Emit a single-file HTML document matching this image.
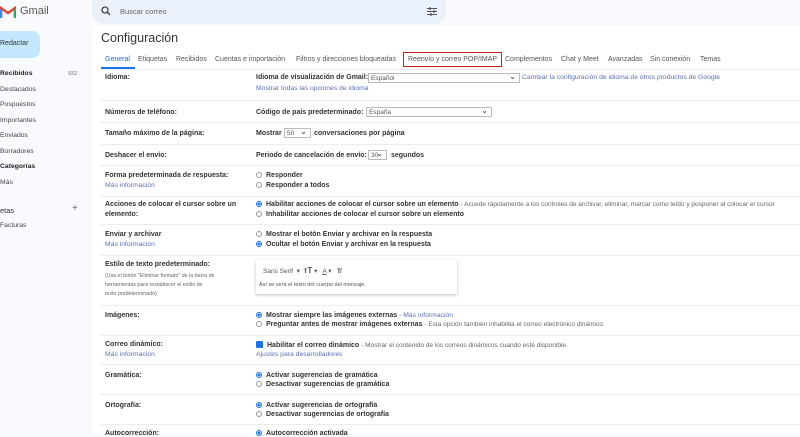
<!DOCTYPE html>
<html><head><meta charset="utf-8"><style>
*{margin:0;padding:0;box-sizing:border-box}
body{width:800px;height:434px;overflow:hidden;background:#f8fafd;font-family:"Liberation Sans",sans-serif;color:#202124;position:relative}
.a{position:absolute;white-space:nowrap}
.main{position:absolute;left:92px;top:26px;width:708px;height:408px;background:#fff}
.s{font-size:6.5px;color:#444}
.b{font-weight:bold;font-size:7px;color:#333}
.l{font-size:7px;color:#333;font-weight:bold}
.lk{color:#5a6fb8;font-size:6.8px}
.g{color:#666;font-size:6.5px}
.sep{position:absolute;left:101px;width:699px;height:1px;background:#ececec}
.tab{position:absolute;top:56px;font-size:7px;color:#555}
.r{display:inline-block;width:6px;height:6px;border:1px solid #999;border-radius:50%;vertical-align:-1px;margin-right:4px}
.r.on{border-color:#1a73e8;background:radial-gradient(#1a73e8 45%,#fff 55%)}
.sel{position:absolute;border:1px solid #bbb;height:10px;font-size:6.5px;color:#555;padding:1px 2px;background:#fff}
.sel:after{content:"⌄";position:absolute;right:3px;top:-2px;font-size:8px;color:#333}
.side{position:absolute;left:0;font-size:6.8px;color:#444}
</style></head><body>
<svg class="a" style="left:0;top:6px" width="16" height="12" viewBox="0 0 16 12"><path d="M1 12V2l7 5 7-5v10" fill="none" stroke="#ea4335" stroke-width="2.4"/><path d="M1 12V3" stroke="#4285f4" stroke-width="2.4"/><path d="M15 12V3" stroke="#34a853" stroke-width="2.4"/></svg>
<div class="a" style="left:20px;top:5px;font-size:11px;color:#555">Gmail</div>
<div class="a" style="left:92px;top:0;width:354px;height:24px;background:#eaf1fb;border-radius:0 0 12px 12px"></div>
<svg class="a" style="left:101px;top:6px" width="10" height="10" viewBox="0 0 10 10"><circle cx="4" cy="4" r="3" fill="none" stroke="#444" stroke-width="1.3"/><path d="M6.3 6.3L9 9" stroke="#444" stroke-width="1.4"/></svg>
<div class="a" style="left:120px;top:7px;font-size:7.5px;color:#666">Buscar correo</div>
<svg class="a" style="left:427px;top:7px" width="10" height="9" viewBox="0 0 10 9"><path d="M0 1.5h10M0 4.5h10M0 7.5h10" stroke="#555" stroke-width="1"/><path d="M3 0v3M7 3v3M4 6v3" stroke="#555" stroke-width="1.2"/></svg>
<div class="a" style="left:-10px;top:31px;width:50px;height:27px;background:#c2e7ff;border-radius:8px"></div>
<div class="a" style="left:0;top:40px;font-size:7px;color:#333">Redactar</div>
<div class="side" style="top:70px;font-weight:bold;color:#222">Recibidos</div><div class="a" style="left:68px;top:71px;font-size:5.5px;color:#777">932</div>
<div class="side" style="top:86px">Destacados</div>
<div class="side" style="top:101px">Pospuestos</div>
<div class="side" style="top:117px">Importantes</div>
<div class="side" style="top:132px">Enviados</div>
<div class="side" style="top:148px">Borradores</div>
<div class="side" style="top:163px;font-weight:bold;color:#222">Categorías</div>
<div class="side" style="top:179px">Más</div>
<div class="side" style="top:206px;font-size:7.5px;color:#333">etas</div><div class="a" style="left:72px;top:203px;font-size:10px;color:#666">+</div>
<div class="side" style="top:222px">Facturas</div>
<div class="main"></div>
<div class="a" style="left:101px;top:31px;font-size:12.5px;color:#333">Configuración</div>
<div class="tab" style="left:105px;color:#1a73e8">General</div>
<div class="a" style="left:101px;top:67px;width:34px;height:2px;background:#1a73e8"></div>
<div class="tab" style="left:138px">Etiquetas</div>
<div class="tab" style="left:176px">Recibidos</div>
<div class="tab" style="left:215px">Cuentas e importación</div>
<div class="tab" style="left:296px">Filtros y direcciones bloqueadas</div>
<div class="a" style="left:403px;top:52px;width:99px;height:15px;border:1.5px solid #c5221f"></div>
<div class="tab" style="left:408px">Reenvío y correo POP/IMAP</div>
<div class="tab" style="left:505px">Complementos</div>
<div class="tab" style="left:561px">Chat y Meet</div>
<div class="tab" style="left:608px">Avanzadas</div>
<div class="tab" style="left:650px">Sin conexión</div>
<div class="tab" style="left:700px">Temas</div>
<div class="sep" style="top:69px"></div>
<div class="a l" style="left:105px;top:74px">Idioma:</div>
<div class="a b" style="left:256px;top:74px">Idioma de visualización de Gmail:</div>
<div class="sel" style="left:368px;top:73px;width:152px">Español</div>
<div class="a lk" style="left:522px;top:74px">Cambiar la configuración de idioma de otros productos de Google</div>
<div class="a lk" style="left:256px;top:85px">Mostrar todas las opciones de idioma</div>
<div class="sep" style="top:100px"></div>
<div class="a l" style="left:105px;top:109px">Números de teléfono:</div>
<div class="a b" style="left:256px;top:109px">Código de país predeterminado:</div>
<div class="sel" style="left:366px;top:107px;width:126px">España</div>
<div class="sep" style="top:122px"></div>
<div class="a l" style="left:105px;top:130px">Tamaño máximo de la página:</div>
<div class="a b" style="left:256px;top:130px">Mostrar</div><div class="sel" style="left:284px;top:128px;width:27px">50</div><div class="a b" style="left:314px;top:130px">conversaciones por página</div>
<div class="sep" style="top:144px"></div>
<div class="a l" style="left:105px;top:152px">Deshacer el envío:</div>
<div class="a b" style="left:256px;top:152px">Periodo de cancelación de envío:</div><div class="sel" style="left:368px;top:150px;width:19px">30</div><div class="a b" style="left:391px;top:152px">segundos</div>
<div class="sep" style="top:165px"></div>
<div class="a l" style="left:105px;top:172px">Forma predeterminada de respuesta:</div>
<div class="a lk" style="left:105px;top:182px">Más información</div>
<div class="a b" style="left:256px;top:172px"><span class="r"></span>Responder</div>
<div class="a b" style="left:256px;top:182px"><span class="r"></span>Responder a todos</div>
<div class="sep" style="top:196px"></div>
<div class="a l" style="left:105px;top:201px">Acciones de colocar el cursor sobre un</div>
<div class="a l" style="left:105px;top:211px">elemento:</div>
<div class="a b" style="left:256px;top:201px"><span class="r on"></span>Habilitar acciones de colocar el cursor sobre un elemento <span class="g" style="font-weight:normal">- Accede rápidamente a los controles de archivar, eliminar, marcar como leído y posponer al colocar el cursor</span></div>
<div class="a b" style="left:256px;top:211px"><span class="r"></span>Inhabilitar acciones de colocar el cursor sobre un elemento</div>
<div class="sep" style="top:224px"></div>
<div class="a l" style="left:105px;top:231px">Enviar y archivar</div>
<div class="a lk" style="left:105px;top:241px">Más información</div>
<div class="a b" style="left:256px;top:231px"><span class="r"></span>Mostrar el botón Enviar y archivar en la respuesta</div>
<div class="a b" style="left:256px;top:241px"><span class="r on"></span>Ocultar el botón Enviar y archivar en la respuesta</div>
<div class="sep" style="top:255px"></div>
<div class="a l" style="left:105px;top:261px">Estilo de texto predeterminado:</div>
<div class="a" style="left:105px;top:272px;font-size:5.3px;color:#666;line-height:9px;white-space:normal;width:110px">(Usa el botón "Eliminar formato" de la barra de herramientas para restablecer el estilo de texto predeterminado)</div>
<div class="a" style="left:256px;top:260px;width:201px;height:34px;background:#fff;box-shadow:0 1px 3px rgba(0,0,0,.25)"></div>
<div class="a" style="left:263px;top:266px;font-size:6.5px;color:#555">Sans Serif &nbsp;▾ &nbsp;<b style="font-size:8px">ᴛT</b> ▾ &nbsp; <u>A</u> ▾ &nbsp; <b>T̸</b></div>
<div class="a" style="left:259px;top:282px;font-size:5.5px;color:#555">Así se verá el texto del cuerpo del mensaje.</div>
<div class="sep" style="top:305px"></div>
<div class="a l" style="left:105px;top:312px">Imágenes:</div>
<div class="a b" style="left:256px;top:312px"><span class="r on"></span>Mostrar siempre las imágenes externas <span class="lk" style="font-weight:normal">- Más información</span></div>
<div class="a b" style="left:256px;top:321px"><span class="r"></span>Preguntar antes de mostrar imágenes externas <span class="g" style="font-weight:normal">- Esta opción también inhabilita el correo electrónico dinámico.</span></div>
<div class="sep" style="top:335px"></div>
<div class="a l" style="left:105px;top:341px">Correo dinámico:</div>
<div class="a lk" style="left:105px;top:351px">Más información</div>
<div class="a b" style="left:256px;top:341px"><span style="display:inline-block;width:7px;height:7px;background:#1a73e8;border-radius:1px;vertical-align:-1px;margin-right:4px"></span>Habilitar el correo dinámico <span class="g" style="font-weight:normal">- Mostrar el contenido de los correos dinámicos cuando esté disponible.</span></div>
<div class="a lk" style="left:256px;top:351px">Ajustes para desarrolladores</div>
<div class="sep" style="top:364px"></div>
<div class="a l" style="left:105px;top:372px">Gramática:</div>
<div class="a b" style="left:256px;top:372px"><span class="r on"></span>Activar sugerencias de gramática</div>
<div class="a b" style="left:256px;top:381px"><span class="r"></span>Desactivar sugerencias de gramática</div>
<div class="sep" style="top:394px"></div>
<div class="a l" style="left:105px;top:402px">Ortografía:</div>
<div class="a b" style="left:256px;top:402px"><span class="r on"></span>Activar sugerencias de ortografía</div>
<div class="a b" style="left:256px;top:411px"><span class="r"></span>Desactivar sugerencias de ortografía</div>
<div class="sep" style="top:424px"></div>
<div class="a l" style="left:105px;top:430px">Autocorrección:</div>
<div class="a b" style="left:256px;top:430px"><span class="r on"></span>Autocorrección activada</div>
</body></html>
